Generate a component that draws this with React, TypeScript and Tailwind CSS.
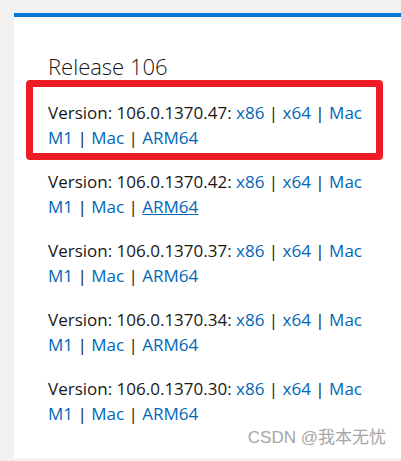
const releases = ["106.0.1370.47", "106.0.1370.42", "106.0.1370.37", "106.0.1370.34", "106.0.1370.30"];

function Sep() {
  return <span className="text-[#171717]"> | </span>;
}

function Entry({ version, underlineArm }: { version: string; underlineArm?: boolean }) {
  return (
    <p className="w-[330px] text-[17px] leading-[25px] text-[#171717]">
      Version: {version}: <a className="text-[#0067b8]">x86</a>
      <Sep />
      <a className="text-[#0067b8]">x64</a>
      <Sep />
      <a className="text-[#0067b8]">Mac</a> <a className="text-[#0067b8]">M1</a>
      <Sep />
      <a className="text-[#0067b8]">Mac</a>
      <Sep />
      <a className={underlineArm ? "text-[#0067b8] underline" : "text-[#0067b8]"}>ARM64</a>
    </p>
  );
}

export default function App() {
  return (
    <div
      className="relative h-[461px] w-[401px] overflow-hidden bg-[#f2f2f2] pl-[14px] pt-[13px]"
      style={{ fontFamily: '"Open Sans", "Noto Sans CJK SC", sans-serif' }}
    >
      <div className="relative h-[445px] w-[400px] border-t-[4px] border-[#0078d4] bg-white pl-[34px] pt-[35px]">
        <h2 className="text-[22px] font-light leading-[28px] text-[#171717]">Release 106</h2>
        <div className="mt-[20px] flex flex-col gap-[19px]">
          {releases.map((v, i) => (
            <Entry key={v} version={v} underlineArm={i === 1} />
          ))}
        </div>
        <div className="pointer-events-none absolute left-[12px] top-[63px] h-[80px] w-[357px] rounded-[4px] border-[7px] border-[#ee1c25]" />
      </div>
      <div
        className="absolute right-[15px] bottom-[11px] text-[17px] text-[#a6a6a6]"
        style={{ fontFamily: '"Liberation Sans", "Noto Sans CJK SC", sans-serif' }}
      >
        CSDN @我本无忧
      </div>
    </div>
  );
}
